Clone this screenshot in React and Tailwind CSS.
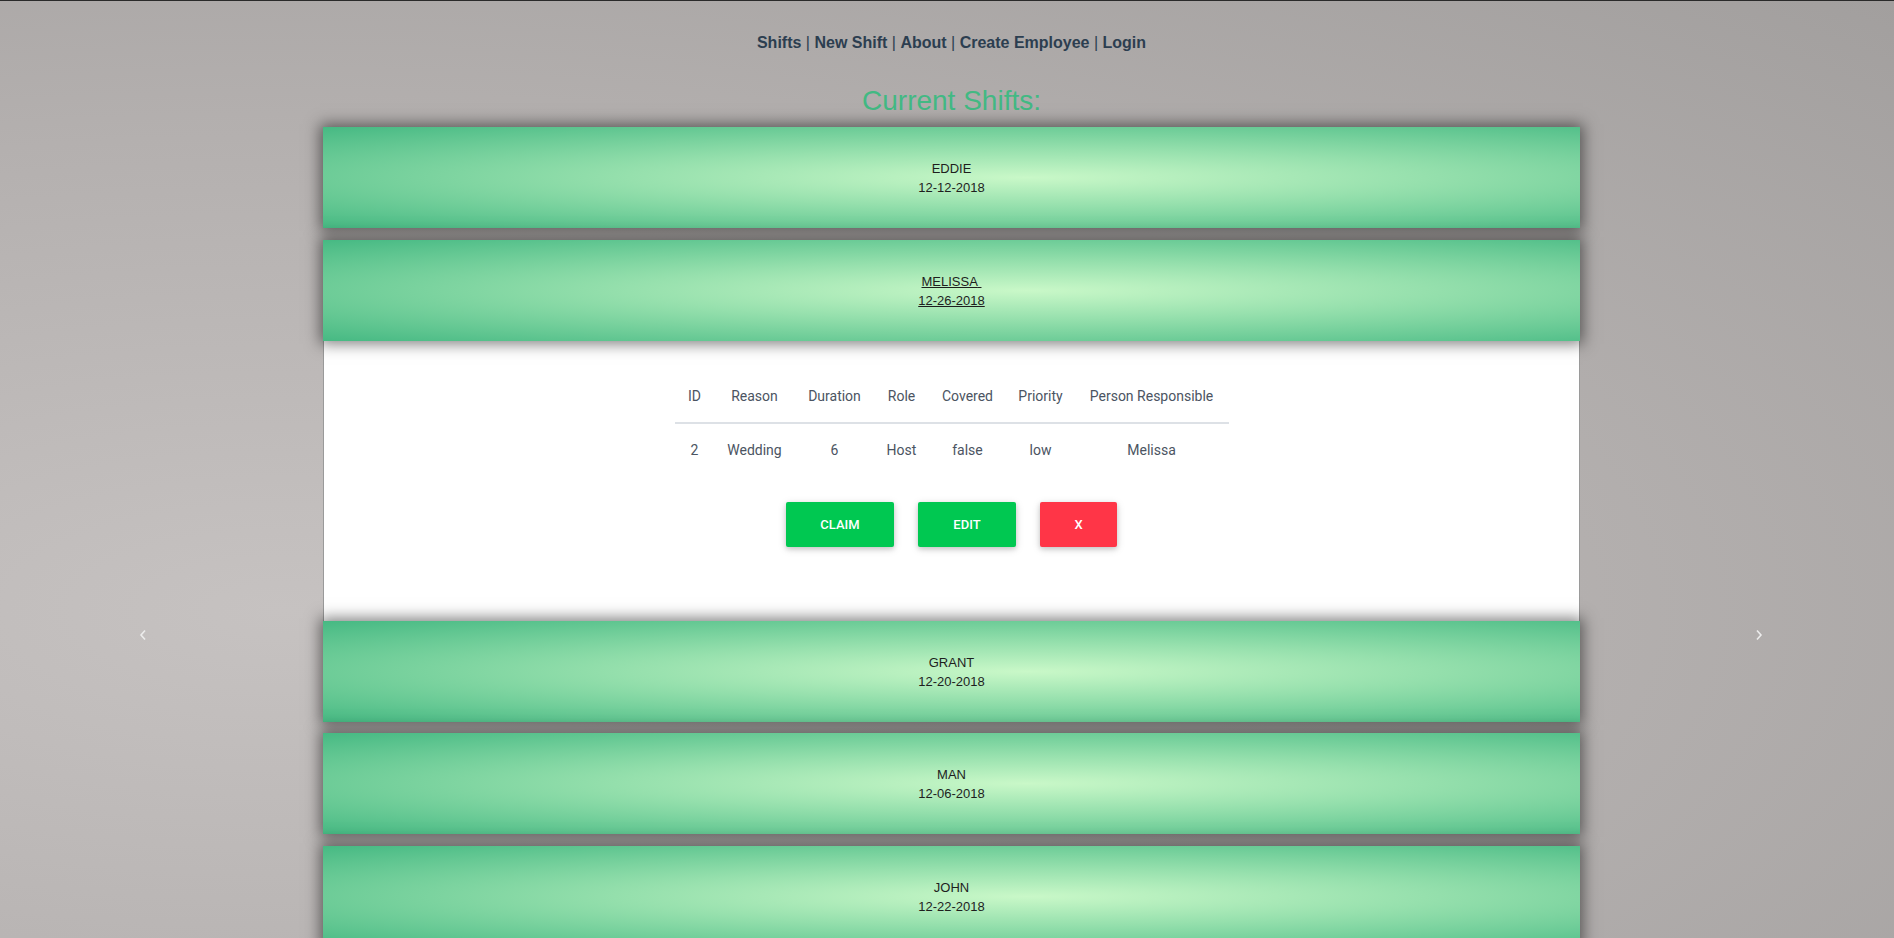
import React from "react";

const shifts = [
  { name: "EDDIE", date: "12-12-2018" },
  { name: "MELISSA", date: "12-26-2018", open: true },
  { name: "GRANT", date: "12-20-2018" },
  { name: "MAN", date: "12-06-2018" },
  { name: "JOHN", date: "12-22-2018" },
];

const cols = [
  { h: "ID", v: "2", w: "w-[40px]" },
  { h: "Reason", v: "Wedding", w: "w-[80px]" },
  { h: "Duration", v: "6", w: "w-[80px]" },
  { h: "Role", v: "Host", w: "w-[54px]" },
  { h: "Covered", v: "false", w: "w-[78px]" },
  { h: "Priority", v: "low", w: "w-[68px]" },
  { h: "Person Responsible", v: "Melissa", w: "w-[154px]" },
];

function Card({ name, date, open }) {
  return (
    <div className="relative z-10 h-[101px] flex flex-col items-center justify-center bg-[radial-gradient(ellipse_at_56%_50%,#c9f8c8_0%,#96e0ad_40%,#46b983_100%)] shadow-[0_0_14px_3px_rgba(0,0,0,0.5)] text-[13px] leading-[19px] text-[#1e1e1e] font-['Liberation_Sans',Arial,sans-serif]">
      <span className={open ? "underline" : ""}>
        {name}
        {open ? "\u00a0" : ""}
      </span>
      <span className={open ? "underline" : ""}>{date}</span>
    </div>
  );
}

const btnBase =
  "h-[45px] rounded-[2px] text-white text-[13px] font-medium font-['Roboto',sans-serif] shadow-[0_2px_5px_0_rgba(0,0,0,0.16),0_2px_10px_0_rgba(0,0,0,0.12)]";

function Panel() {
  return (
    <div className="relative z-0 h-[280px] bg-white border-x border-[#9a9a9a] flex flex-col items-center pt-[30px] font-['Roboto',sans-serif]">
      <table className="border-collapse text-[14px] text-[#4b5462]">
        <thead>
          <tr className="border-b-2 border-[#dde1e6]">
            {cols.map((c) => (
              <th key={c.h} className={"font-normal py-[15px] leading-[21px] text-center " + c.w}>
                {c.h}
              </th>
            ))}
          </tr>
        </thead>
        <tbody>
          <tr>
            {cols.map((c) => (
              <td key={c.h} className={"py-[16px] leading-[21px] text-center " + c.w}>
                {c.v}
              </td>
            ))}
          </tr>
        </tbody>
      </table>
      <div className="mt-[25px] flex gap-[24px]">
        <button className={btnBase + " w-[108px] bg-[#00c851]"}>CLAIM</button>
        <button className={btnBase + " w-[98px] bg-[#00c851]"}>EDIT</button>
        <button className={btnBase + " w-[77px] bg-[#ff3547]"}>X</button>
      </div>
    </div>
  );
}

function Chevron({ dir }) {
  return (
    <svg width="8" height="12" viewBox="0 0 8 12" fill="none">
      <path
        d={dir === "left" ? "M6 1.5 L2 6 L6 10.5" : "M2 1.5 L6 6 L2 10.5"}
        stroke="#ececec"
        strokeWidth="1.6"
      />
    </svg>
  );
}

export default function App() {
  return (
    <div className="relative h-[938px] overflow-hidden border-t border-[#2a2a2a] bg-[radial-gradient(ellipse_at_15%_65%,#c6c2c1_0%,#b4b0af_55%,#a29f9e_100%)] font-['Liberation_Sans',Arial,sans-serif]">
      <div className="pl-[9px]">
        <nav className="pt-[32px] text-center text-[16px] leading-[20px] font-bold text-[#2c3e50]">
          <span>Shifts</span>
          <span className="font-normal"> | </span>
          <span>New Shift</span>
          <span className="font-normal"> | </span>
          <span>About</span>
          <span className="font-normal"> | </span>
          <span>Create Employee</span>
          <span className="font-normal"> | </span>
          <span>Login</span>
        </nav>
        <h2 className="mt-[32px] text-center text-[28px] leading-[32px] text-[#42b983] font-normal">
          Current Shifts:
        </h2>
        <div className="mt-[10px] flex justify-center">
          <div className="w-[1257px] flex flex-col">
            <Card {...shifts[0]} />
            <div className="h-[12px]" />
            <Card {...shifts[1]} />
            <Panel />
            <Card {...shifts[2]} />
            <div className="h-[11px]" />
            <Card {...shifts[3]} />
            <div className="h-[12px]" />
            <Card {...shifts[4]} />
          </div>
        </div>
      </div>
      <div className="absolute left-[139px] top-[628px]">
        <Chevron dir="left" />
      </div>
      <div className="absolute left-[1755px] top-[628px]">
        <Chevron dir="right" />
      </div>
    </div>
  );
}
